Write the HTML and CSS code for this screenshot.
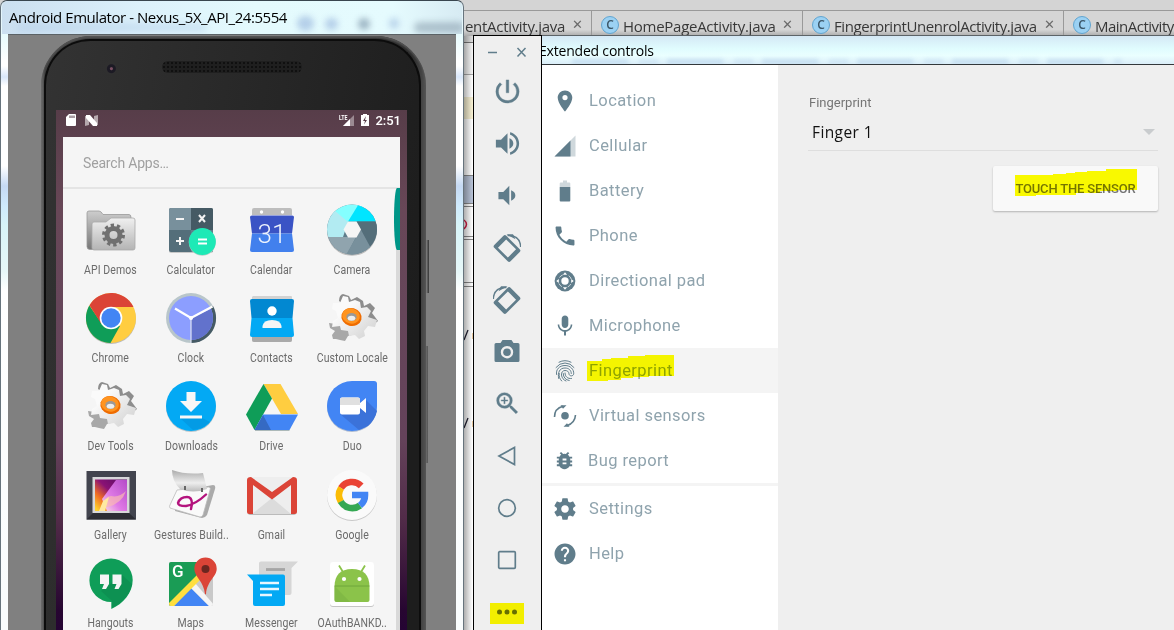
FILE: index.html
```html
<!DOCTYPE html>
<html lang="en">
<head>
<meta charset="utf-8">
<title>Android Emulator</title>
<link rel="stylesheet" href="styles.css">
</head>
<body>
<div class="desktop">
  <div class="ide">
    <div class="ide-tabs">
      <div class="tab t1"><span class="tab-name n1">entActivity.java</span><span class="x">✕</span></div>
      <div class="tab t2"><span class="c"><b>C</b></span><span class="tab-name n2">HomePageActivity.java</span><span class="x">✕</span></div>
      <div class="tab t3"><span class="c"><b>C</b></span><span class="tab-name n3">FingerprintUnenrolActivity.java</span><span class="x">✕</span></div>
      <div class="tab t4"><span class="c"><b>C</b></span><span class="tab-name n4">MainActivity</span></div>
    </div>
    <svg class="ide-strip" width="12" height="595" viewBox="0 0 12 595">
      <rect width="12" height="595" fill="#fff"/>
      <rect width="12" height="7" fill="#dcdcdc"/><rect y="6" width="12" height="1" fill="#777"/>
      <rect y="7" width="12" height="31" fill="#f4f4f4"/><rect y="38" width="12" height="1" fill="#aaa"/>
      <rect y="61" width="12" height="22" fill="#f7f0d2"/>
      <rect y="139" width="12" height="28" fill="#b7c2d6"/><path d="M0 139.500H12M0 167.500H12M0 170.500H12M0 200.500H12M0 203.500H12M0 246.500H12M0 250.500H12" stroke="#888"/>
      <path d="M1 184q5 4 0 9" fill="none" stroke="#d81b45" stroke-width="1.500"/>
      <path d="M1 304l4-10M1 392l4-10" stroke="#223" stroke-width="1.300"/>
      <path d="M9.500 297v6M9.500 385v6" stroke="#e8c9a0"/>
      <defs><linearGradient id="sh"><stop stop-color="#000" stop-opacity=".35"/><stop offset=".8" stop-color="#000" stop-opacity="0"/></linearGradient></defs>
      <rect width="12" height="595" fill="url(#sh)"/>
    </svg>
  </div>

  <section class="emulator">
    <div class="emu-title"><i class="blob b1"></i><i class="blob b2"></i><i class="blob b3"></i><i class="blob b4"></i><i class="blob b5"></i><i class="blob b6"></i><span>Android Emulator - Nexus_5X_API_24:5554</span></div>
    <div class="emu-body">
      <i class="side-key k1"></i><i class="side-key k2"></i>
      <div class="phone">
        <div class="phone-face">
          <div class="phone-top"><i class="lens"></i><i class="speaker"></i></div>
          <div class="screen">
            <div class="status">
              <svg width="10" height="12" viewBox="0 0 10 12"><path d="M3 0h6q1 0 1 1v10q0 1-1 1H1q-1 0-1-1V3z" fill="#fff"/><path d="M4 1.500v2.500M6 1.500v2.500M8 1.500v2.500" stroke="#573d49"/></svg>
              <svg class="n" width="13" height="11" viewBox="0 0 13 11"><path d="M0 1h4v9l-4 1zM9 1l4-1v10l-4 1z" fill="#b5a9ae"/><path d="M1 0h4l7 8v3H8L1 3z" fill="#fff"/></svg>
              <span class="space"></span>
              <svg width="16" height="13" viewBox="0 0 16 13"><path d="M15 1v11H4z" fill="#9b8a92"/><path d="M11 5v7H4z" fill="#fff"/><text x="0" y="5.500" fill="#fff" font-family="Roboto,sans-serif" font-size="6.500" font-weight="700" textLength="8.500" lengthAdjust="spacingAndGlyphs">LTE</text></svg>
              <svg class="bat" width="8" height="12" viewBox="0 0 8 12"><path d="M2 0h4v1h2v11H0V1h2z" fill="#fff"/><path d="M5 2L2 7h2l-1 3.500L6 6H4z" fill="#573d49"/></svg>
              <span class="time">2:51</span>
            </div>
            <div class="drawer">
              <div class="search">Search Apps…</div>
              <div class="apps">
                <div class="app"><svg viewBox="0 0 52 52"><defs><linearGradient id="fg" x2="0" y2="1"><stop stop-color="#f0f0f0"/><stop offset="1" stop-color="#b4b4b4"/></linearGradient><linearGradient id="fb" x2="0" y2="1"><stop stop-color="#cdcdcd"/><stop offset="1" stop-color="#777"/></linearGradient></defs><path d="M2 9q0-2 2-2h10q2 0 4 3.500h26q2 0 2 3v32H5q-3 0-3-3z" fill="url(#fb)" stroke="#999" stroke-width=".8"/><path d="M7 20q0-2 2-2h12l5-4h22q2 0 2 2v28q0 2-2 2H9q-2 0-2-2z" fill="url(#fg)" stroke="#aaa" stroke-width=".8"/><circle cx="28.500" cy="31" r="9.500" fill="none" stroke="#707070" stroke-width="4" stroke-dasharray="3.200 2.770"/><circle cx="28.500" cy="31" r="6.500" fill="none" stroke="#707070" stroke-width="5"/></svg><span>API Demos</span></div>
                <div class="app"><svg viewBox="0 0 52 52"><rect x="4" y="5" width="44" height="44" rx="2" fill="#c8c8c8"/><rect x="4" y="4" width="44" height="44" rx="2" fill="#546e7a"/><path d="M4 6q0-2 2-2h20v22H4z" fill="#78909c"/><path d="M26 4h20q2 0 2 2v20H26z" fill="#455a64"/><path d="M26 26h22v20q0 2-2 2H26z" fill="#607d8b"/><path d="M11 15h8M11 37h8M15 33v8M34 11l6 7M40 11l-6 7" stroke="#f3f3f3" stroke-width="2"/><circle cx="37.300" cy="38.300" r="13.500" fill="#b5ccc5"/><circle cx="37.300" cy="37.500" r="13.500" fill="#1de9b6"/><path d="M33 35.500h9M33 39.500h9" stroke="#fff" stroke-width="2"/></svg><span>Calculator</span></div>
                <div class="app"><svg viewBox="0 0 52 52"><path d="M6 11V6q0-2 2-2h36q2 0 2 2v5z" fill="#bdbdbd"/><circle cx="15.500" cy="8" r="1.700" fill="#fff"/><circle cx="36.500" cy="8" r="1.700" fill="#fff"/><path d="M4 13q0-1.500 2-1.500h40q2 0 2 1.500l-2 16.500H6z" fill="#3a53c5"/><path d="M6 29.500h40L48 46q0 2-2 2H6q-2 0-2-2z" fill="#4280ed"/><text x="26" y="38.500" text-anchor="middle" font-family="Roboto,sans-serif" font-size="26" font-weight="300" fill="#eef3fd">31</text></svg><span>Calendar</span></div>
                <div class="app"><svg viewBox="0 0 52 52"><circle cx="26" cy="26.800" r="25" fill="#bbb"/><clipPath id="cc"><circle cx="26" cy="25.500" r="25"/></clipPath><g clip-path="url(#cc)"><rect width="52" height="52" fill="#607d8b"/><path d="M0 0H40L22 18 17.500 26z" fill="#84ffff"/><path d="M22 17.500L34-2H60V17.500z" fill="#00e5ff"/><path d="M8 6l14 12-5 15H-2V6z" fill="#b2ebf2"/><path d="M-2 33h32L18 56H-4z" fill="#90a4ae"/><path d="M30 33.500L35 25l12 22-15 9H17z" fill="#78909c"/><path d="M30.500 17.500H56V48H47z" fill="#546e7a"/></g><path d="M22 17.500h8.500l4.500 8-4.500 8H22l-4.500-8z" fill="#f5f5f5"/></svg><span>Camera</span></div>

                <div class="app"><svg viewBox="0 0 52 52"><circle cx="26" cy="27" r="25" fill="#bbb"/><circle cx="26" cy="26" r="25" fill="#ffcd40"/><path d="M4.300 13.500L17 32l18 2L25.500 51A25 25 0 0 1 4.300 13.500z" fill="#0f9d58"/><path d="M4.500 13.200L16.300 32 25 15H48.500A25 25 0 0 0 4.500 13.200z" fill="#db4437"/><circle cx="26" cy="26" r="11.300" fill="#fff"/><circle cx="26" cy="26" r="9.700" fill="#4285f4"/></svg><span>Chrome</span></div>
                <div class="app"><svg viewBox="0 0 52 52"><circle cx="26" cy="26" r="25" fill="#b9c6ca"/><path d="M26 26L48 14A25 25 0 0 1 26 51z" fill="#455a64"/><circle cx="26" cy="26" r="22" fill="#8c9eff"/><path d="M26 26L46 17A22 22 0 0 1 26 48z" fill="#6272cc"/><path d="M10 16.500L26 26l21.500-11.500" fill="none" stroke="#fff" stroke-width="2.300"/><path d="M26 26v25" stroke="#e0e4f5" stroke-width="1.200"/><circle cx="26" cy="26" r="2" fill="#fff"/></svg><span>Clock</span></div>
                <div class="app"><svg viewBox="0 0 52 52"><path d="M7 4h38q1 0 1 1v43q0 2-2 2H8q-2 0-2-2V5z" fill="#d2d2d2"/><path d="M6 44h40v4q0 2-2 2H8q-2 0-2-2z" fill="#aaa"/><path d="M4 9q0-2 2-2h40q2 0 2 2l-1.500 17h-41z" fill="#0288d1"/><path d="M5.500 26h41L48 43q0 2-2 2H6q-2 0-2-2z" fill="#03a9f4"/><circle cx="26" cy="19" r="4.700" fill="#fff"/><path d="M16.500 36v-2q1-6 9.500-6t9.500 6v2z" fill="#f5f5f5"/></svg><span>Contacts</span></div>
                <div class="app"><svg viewBox="0 0 52 52"><defs><linearGradient id="gg" x2="1" y2="1"><stop offset=".3" stop-color="#fafafa"/><stop offset="1" stop-color="#cfcfcf"/></linearGradient><g id="gear"><path d="M13 9q0-6 4-7l6 2 2 4 6-3 6 4 1 5 6-3 5 5-3 5 3 4 3 4-5 4z" fill="#8d8d8d"/><path d="M3 31l7 1 6 2 12 6-2 3-4 1-3 5-5-1-4-1-3 0-1-4 3-4-5-3z" fill="#a8a8a8"/><path d="M7 11l7 0 3-7 5 1 1 5 6-2 5 2 1 6 6-1 4 4-3 6 9 3-2 7-7-1-4 5 1 5-6 3-4-4-6 1-1-5-7-1-1-4-8 1 1-6 5-3-2-7-4-2z" fill="url(#gg)"/><ellipse cx="25.500" cy="25" rx="10.200" ry="9" transform="rotate(15 25.500 25)" fill="#ef6c00"/><ellipse cx="25" cy="24" rx="9" ry="7.500" transform="rotate(15 25 24)" fill="#ff9420"/><ellipse cx="25.500" cy="25" rx="5.200" ry="4" fill="#999"/><ellipse cx="25.500" cy="26.200" rx="3.800" ry="2.500" fill="#eee"/></g></defs><use href="#gear"/></svg><span>Custom Locale</span></div>

                <div class="app"><svg viewBox="0 0 52 52"><use href="#gear"/></svg><span>Dev Tools</span></div>
                <div class="app"><svg viewBox="0 0 52 52"><circle cx="26" cy="27" r="25" fill="#b8c6cc"/><circle cx="26" cy="26" r="25" fill="#03a9f4"/><path d="M37 38L45 42 37 48 28 50 15 38z" fill="#039be5"/><path d="M21.500 12h9v9H37L26 32 15 21h6.500zM15 35.500h22v3H15z" fill="#f7f7f7"/></svg><span>Downloads</span></div>
                <div class="app"><svg viewBox="0 0 52 52"><path d="M17.500 4h17L52 34H35z" fill="#ffcd40"/><path d="M17.500 4L26 18.500 8.500 50 0 34.500z" fill="#0f9d58"/><path d="M17 34.500h35L43.500 50h-35z" fill="#4285f4"/><path d="M17 35l8 15H8.500z" fill="#356ac3"/><path d="M9 50.500h34.500" stroke="#9aa" stroke-width=".8"/></svg><span>Drive</span></div>
                <div class="app"><svg viewBox="0 0 52 52"><path d="M26 2h22q3 0 3 3v22A25 25 0 1 1 26 2z" fill="#aebbd0"/><path d="M26 1h22q3 0 3 3v22A25 25 0 1 1 26 1z" fill="#4285f4"/><path d="M39 19L51 31Q49 40 42 46L33 50 14 34z" fill="#3b72d9"/><path d="M16 17.500h16q2 0 2 2V23l6-5v15l-6-5v4.500q0 2-2 2H16q-2 0-2-2v-13q0-2 2-2z" fill="#fff"/><path d="M14 19.500q0-2 2-2h16q2 0 2 2V25H14z" fill="#e0e0e0"/></svg><span>Duo</span></div>

                <div class="app"><svg viewBox="0 0 52 52"><defs><linearGradient id="ga" x1="0" x2="1" y1="1" y2="0"><stop offset=".05" stop-color="#ffd12c"/><stop offset=".3" stop-color="#ef6c24"/><stop offset=".55" stop-color="#8a1275"/><stop offset="1" stop-color="#520b61"/></linearGradient><linearGradient id="gp" x1="1" x2="0" y1="0" y2="1"><stop stop-color="#b44bc8"/><stop offset=".6" stop-color="#e07be6"/><stop offset="1" stop-color="#fbe3e3"/></linearGradient></defs><rect x="1.500" y="2" width="49.500" height="48.500" fill="#42444e"/><path d="M1.500 50.500L8 44h36l7 6.500z" fill="#2c2d34"/><rect x="7.500" y="8" width="37" height="36" fill="#d7d7d9"/><rect x="10" y="10.500" width="32" height="31.500" fill="url(#ga)"/><path d="M31 11h11v31H22l-5-12z" fill="url(#gp)"/><path d="M16 40q3-13 10-13 8 2 15-5-4 12-18 16z" fill="#f9b9b4" opacity=".7"/><path d="M14 42l4-10 6-4-4 14z" fill="#ffe9a0"/></svg><span>Gallery</span></div>
                <div class="app"><svg viewBox="0 0 52 52"><defs><linearGradient id="gb" x2="0" y2="1"><stop stop-color="#aaa"/><stop offset=".6" stop-color="#eee"/><stop offset="1" stop-color="#bbb"/></linearGradient></defs><path d="M14 22l34-6q3 0 2 4L42 46q-2 3-5 3L10 42z" fill="#aaa"/><path d="M12 21l32-3q2 1 1 3l-7 25q-1 2-3 2L5 39q-1-2 0-3z" fill="#fafafa" stroke="#bbb" stroke-width=".8"/><path d="M7 1q14 5 31 3l4 16q-14 5-27 0Q7 12 7 1z" fill="url(#gb)"/><path d="M20 17v4M37 19v4" stroke="#666" stroke-width="2"/><path d="M41 25.500Q31 35 21 37q-8 0-8-3 2-6 9-6 5 0 5 7l-1 5" fill="none" stroke="#b4147e" stroke-width="2.400" stroke-linecap="round"/></svg><span>Gestures Build..</span></div>
                <div class="app"><svg viewBox="0 0 52 52"><rect x="2" y="9" width="48" height="37" rx="2" fill="#bbb"/><rect x="1" y="8" width="50" height="37" rx="2" fill="#eee"/><path d="M6 45l20-16 19 16z" fill="#dcdcdc"/><path d="M1 11q0-3 4-3l21 15L47 8q4 0 4 3v32q0 2-2 2h-4V16L26 30.500 7 16v29H3q-2 0-2-2z" fill="#db4437"/></svg><span>Gmail</span></div>
                <div class="app"><svg viewBox="0 0 52 52"><circle cx="26" cy="27" r="25" fill="#c8c8c8"/><circle cx="26" cy="26" r="25" fill="#fafafa"/><g fill="none" stroke-width="6.600"><path d="M35.200 16.800A13 13 0 0 0 15 19" stroke="#ea4335"/><path d="M15.100 19a13 13 0 0 0-.2 13.700" stroke="#fbbc05"/><path d="M14.800 32.500A13 13 0 0 0 34 36.500" stroke="#34a853"/><path d="M34 36.500A13 13 0 0 0 39 26H26" stroke="#4285f4"/></g></svg><span>Google</span></div>

                <div class="app"><svg viewBox="0 0 52 52"><path d="M26 1.500A21.700 21.700 0 0 1 47.700 23C47.700 36 38 47 26.300 52v-7A21.700 21.700 0 1 1 26 1.500z" fill="#0f9d58"/><path d="M37 18l10 9q-3 15-20 24v-7l-11-10z" fill="#0d9152"/><path d="M15 17.500h9V27l-3 5h-4l2-5h-4zM27.500 17.500h9V27l-3 5h-4l2-5h-4z" fill="#f5f5f5"/></svg><span>Hangouts</span></div>
                <div class="app"><svg viewBox="0 0 52 52"><clipPath id="mc"><rect x="4" y="5" width="44" height="44" rx="2"/></clipPath><g clip-path="url(#mc)"><rect width="52" height="52" fill="#c9c9c9"/><path d="M0 0h52L4 50z" fill="#1a9c55"/><path d="M8 50L26 31l18 18z" fill="#4285f4"/><path d="M26 31l4-5 20 23h-6z" fill="#f5f5f5"/><path d="M4 46L33 17l3 5L9 49H4z" fill="#ffdf3f"/></g><text x="7" y="20" font-family="Roboto,sans-serif" font-size="17" font-weight="500" fill="#fff">G</text><path d="M40.500.500a11.200 11.200 0 0 1 11.200 11.200c0 8-9.700 12-10.700 25.500h-1c-1-13-10.700-17.500-10.700-25.500A11.200 11.200 0 0 1 40.500.500z" fill="#db4437"/><circle cx="40.500" cy="12" r="4" fill="#6b2620"/></svg><span>Maps</span></div>
                <div class="app"><svg viewBox="0 0 52 52"><path d="M13 6q0-1.500 2-1.500h37L45.500 11v25q0 2-2 2H15q-2 0-2-2z" fill="#d6d6d6"/><path d="M20 12.500h19" stroke="#a5a5a5" stroke-width="2.800"/><path d="M1 17.500h36q2 0 2 2V47q0 2-2 2H9q-2 0-2-2V24z" fill="#03a9f4"/><path d="M14 26h19M14 32h19M14 38h12" stroke="#e8f6fe" stroke-width="2.600"/></svg><span>Messenger</span></div>
                <div class="app"><svg viewBox="0 0 52 52"><rect x="4" y="6" width="44" height="44" rx="3" fill="#c5c5c5"/><rect x="4" y="5" width="44" height="44" rx="3" fill="#fff"/><path d="M8.500 30q0-18 17.500-18t17.500 18v13q0 2-2 2h-31q-2 0-2-2z" fill="#8bc34a"/><path d="M8.500 29L24 45H10.500q-2 0-2-2z" fill="#7cb342" opacity=".6"/><path d="M8.500 29h35" stroke="#689f38" stroke-width=".8"/><path d="M13 8.500l4 6.500M39 8.500L35 15" stroke="#8bc34a" stroke-width="1.800"/><circle cx="18" cy="22" r="2.100" fill="#fff"/><circle cx="33.500" cy="22" r="2.100" fill="#fff"/></svg><span>OAuthBANKD..</span></div>
              </div>
              <div class="scroll"><i></i></div>
            </div>
          </div>
        </div>
      </div>
    </div>
  </section>

  <section class="toolbar">
    <div class="tool-head"><svg width="42" height="12" viewBox="0 0 42 12"><path d="M1 6.500h9M30.500 2l8 8.500M38.500 2l-8 8.500" stroke="#607d8b" stroke-width="1.500"/></svg></div>
    <div class="tool"><svg viewBox="0 0 24 24" width="31" height="31"><path d="M13 3h-2v10h2V3zm4.830 2.170l-1.420 1.420A6.920 6.920 0 0 1 19 12c0 3.870-3.130 7-7 7s-7-3.130-7-7c0-2.190 1.010-4.140 2.580-5.420L6.170 5.170A8.932 8.932 0 0 0 3 12a9 9 0 0 0 18 0c0-2.740-1.230-5.180-3.170-6.830z" stroke="#607d8b" stroke-width=".3"/></svg></div>
    <div class="tool"><svg viewBox="0 0 24 24" width="31" height="31"><path d="M3 9v6h4l5 5V4L7 9H3zm10.500-1v8c1.800-.7 3-2.200 3-4s-1.200-3.300-3-4zM14 3.230v2.060c2.890.86 5 3.540 5 6.710s-2.110 5.850-5 6.710v2.060c4.010-.91 7-4.490 7-8.770s-2.990-7.860-7-8.770z"/></svg></div>
    <div class="tool"><svg viewBox="0 0 24 24" width="29" height="29"><path d="M4.500 9v6h4l5 5V4l-5 5h-4zM15 7.700v8.600c2.200-.8 3.500-2.400 3.500-4.300S17.200 8.500 15 7.700z"/></svg></div>
    <div class="tool"><svg viewBox="0 0 28 28" width="28" height="28"><g id="rot"><path transform="rotate(45 14 14.500)" d="M4.500 6h19q2 0 2 2v13q0 2-2 2h-19q-2 0-2-2V8q0-2 2-2zM7 8.700v11.600h14V8.700z" fill-rule="evenodd"/><path d="M14.500 1.500Q27 1 27.700 13" fill="none" stroke="#607d8b" stroke-width="1.500"/><path d="M13.500.300h6.500l2.500 5z"/></g></svg></div>
    <div class="tool"><svg viewBox="0 0 28 28" width="28" height="28"><use href="#rot" transform="matrix(-1 0 0 1 28 0)"/></svg></div>
    <div class="tool cam"><svg viewBox="0 0 26 24" width="26" height="24"><path d="M8.500 1h9l2 3H24q1.500 0 1.500 1.500v16q0 1.500-1.500 1.500H2Q.500 23 .500 21.500v-16Q.500 4 2 4h4.500zM13 7a6.200 6.200 0 1 0 0 12.400A6.200 6.200 0 1 0 13 7z" fill-rule="evenodd"/><circle cx="13" cy="13.200" r="3.800"/></svg></div>
    <div class="tool"><svg viewBox="0 0 24 24" width="29" height="29"><path d="M15.500 14h-.79l-.28-.27A6.471 6.471 0 0 0 16 9.500 6.500 6.500 0 1 0 9.500 16c1.610 0 3.090-.59 4.230-1.570l.27.28v.79l5 4.990L20.490 19l-4.990-5zm-6 0C7.010 14 5 11.990 5 9.500S7.010 5 9.500 5 14 7.010 14 9.500 11.990 14 9.500 14zM9 6.800h1V9h2.200v1H10v2.200H9V10H6.800V9H9z" stroke="#607d8b" stroke-width=".3"/></svg></div>
    <div class="tool line"><svg viewBox="0 0 20 20" width="20" height="20"><path d="M17.500 1.500v17L2 10z"/></svg></div>
    <div class="tool line"><svg viewBox="0 0 20 20" width="20" height="20"><circle cx="10" cy="10" r="8.300"/></svg></div>
    <div class="tool line"><svg viewBox="0 0 20 20" width="20" height="20"><rect x="1.700" y="1.700" width="16.600" height="16.600" rx="1"/></svg></div>
    <div class="tool more"><span class="mark"><svg viewBox="0 0 20 6" width="20" height="6"><circle cx="2.500" cy="3" r="2.500"/><circle cx="10" cy="3" r="2.500"/><circle cx="17.500" cy="3" r="2.500"/></svg></span></div>
  </section>

  <section class="extended">
    <div class="ext-title"><i class="blur-text"></i><span>Extended controls</span></div>
    <div class="ext-body">
      <nav class="menu">
        <div class="item"><svg viewBox="0 0 24 24"><path d="M12 1.500C8 1.500 4.700 4.700 4.700 8.700 4.700 14 12 22.500 12 22.500s7.300-8.500 7.300-13.800c0-4-3.300-7.200-7.300-7.200zm0 9.700a2.600 2.600 0 1 1 0-5.200 2.600 2.600 0 0 1 0 5.200z"/></svg><span>Location</span></div>
        <div class="item"><svg viewBox="0 0 24 24"><path d="M22.500 1.500v21h-21z" fill="#cfd8dc"/><path d="M17.500 6.500v16h-16z"/></svg><span>Cellular</span></div>
        <div class="item"><svg viewBox="0 0 24 24"><path d="M17.300 8V4.500q0-1-1-1H14v-2h-4v2H7.700q-1 0-1 1V8z" fill="#cfd8dc"/><path d="M6.700 8h10.600v13.500q0 1-1 1H7.700q-1 0-1-1z"/></svg><span>Battery</span></div>
        <div class="item"><svg viewBox="0 0 24 24"><path transform="translate(-.6 -.6) scale(1.050)" d="M6.620 10.790c1.440 2.830 3.760 5.140 6.590 6.590l2.200-2.200c.27-.27.67-.36 1.020-.24 1.120.37 2.330.57 3.570.57.55 0 1 .45 1 1V20c0 .55-.45 1-1 1-9.390 0-17-7.610-17-17 0-.55.45-1 1-1h3.500c.55 0 1 .45 1 1 0 1.250.2 2.450.57 3.570.11.35.03.74-.25 1.020l-2.200 2.200z"/></svg><span>Phone</span></div>
        <div class="item"><svg viewBox="0 0 24 24"><circle cx="12" cy="12" r="10.400"/><path d="M12 3.300l2.100 2.500H9.900zM12 20.700l2.100-2.500H9.900zM3.300 12l2.500-2.100v4.200zM20.700 12l-2.500-2.100v4.200z" fill="#fff"/><circle cx="12" cy="12" r="6.500" fill="none" stroke="#fff" stroke-width=".7" stroke-dasharray="4 6.210" stroke-dashoffset="-3.100"/><circle cx="12" cy="12" r="3.700" fill="#fff"/></svg><span>Directional pad</span></div>
        <div class="item"><svg viewBox="0 0 24 24"><path transform="translate(0 -.5)" d="M12 14.500c1.900 0 3.300-1.500 3.300-3.400V5.300C15.300 3.400 13.900 2 12 2S8.700 3.400 8.700 5.300v5.800c0 1.900 1.400 3.400 3.300 3.400zm5.700-3.500c0 3.300-2.800 5.600-5.700 5.600S6.300 14.300 6.300 11H4.700c0 3.600 2.900 6.700 6.300 7.200V22h2v-3.800c3.500-.5 6.300-3.600 6.300-7.200z"/></svg><span>Microphone</span></div>
        <div class="item active"><svg viewBox="0 0 24 24"><g fill="none" stroke="#607d8b" stroke-width="1" stroke-linecap="round"><path d="M6 3.200Q12 0 18 3.200M3 8.500Q6.500 4 12 4t9 4.500"/><path d="M3.600 15.500C2.500 10.500 6.500 6.500 12 6.500s9 4 8.700 8.300c-.3 2.800-4.500 2.700-4.700 0C15.800 12.500 14.200 11.500 12 11.500s-3.900 2-3.500 4.500c.4 3 2 5 4.500 6"/><path d="M5.700 19.500C4.500 13.500 6.500 9 12 9c4 0 6.300 2.500 6.300 5.500M8.700 22C6.500 19.500 5.800 17.500 6.200 14.500M12 14c0 3.500 2.500 6 6.500 5.500M10.200 14.500c.2 4 2.300 6.500 6 7"/></g></svg><span>Fingerprint</span><svg class="hl" width="88" height="28" viewBox="0 0 88 28"><path d="M0 7h15V5h9V4h17V2h17V1h29v21H62v1H46v1H34v2H21v1H0z"/></svg></div>
        <div class="item"><svg viewBox="0 0 24 24"><circle cx="12" cy="11.700" r="3.800"/><path d="M1.500 13Q1.500 4.500 10 2.300M22.500 11Q22 19 14 21.700" fill="none" stroke="#607d8b" stroke-width="1.600"/><path d="M7.500 1.200h6l-3.500 3.500zM16.500 22.700h-6l3.500-3.500z"/></svg><span>Virtual sensors</span></div>
        <div class="item bug"><svg viewBox="0 0 24 24"><path d="M20 8h-2.810c-.45-.78-1.070-1.450-1.820-1.960L17 4.410 15.590 3l-2.170 2.170a6.002 6.002 0 0 0-2.830 0L8.410 3 7 4.410l1.620 1.630C7.880 6.550 7.260 7.220 6.810 8H4v2h2.090c-.05.33-.09.66-.09 1v1H4v2h2v1c0 .34.040.67.090 1H4v2h2.810c1.040 1.790 2.970 3 5.190 3s4.150-1.210 5.190-3H20v-2h-2.090c.05-.33.090-.66.090-1v-1h2v-2h-2v-1c0-.34-.04-.67-.09-1H20V8zm-6 8h-4v-2h4v2zm0-4h-4v-2h4v2z"/></svg><span>Bug report</span></div>
        <div class="rule"></div>
        <div class="item"><svg viewBox="0 0 24 24"><path transform="translate(-1 -1) scale(1.083)" d="M19.430 12.980c.04-.32.070-.64.070-.98s-.03-.66-.07-.98l2.110-1.650c.19-.15.24-.42.120-.64l-2-3.460c-.12-.22-.39-.3-.61-.22l-2.490 1c-.52-.4-1.080-.73-1.690-.98l-.38-2.650A.488.488 0 0 0 14 2h-4c-.25 0-.46.180-.49.420l-.38 2.650c-.61.250-1.170.590-1.690.980l-2.490-1c-.23-.09-.49 0-.61.220l-2 3.460c-.13.220-.07.490.120.640l2.110 1.650c-.04.320-.07.650-.07.980s.030.660.070.980l-2.110 1.650c-.19.150-.24.420-.12.640l2 3.460c.12.220.390.300.610.220l2.490-1c.52.400 1.080.730 1.690.980l.38 2.650c.03.240.240.420.490.420h4c.25 0 .46-.18.49-.42l.38-2.650c.61-.25 1.170-.59 1.690-.98l2.490 1c.23.090.490 0 .610-.22l2-3.460c.12-.22.070-.49-.12-.64l-2.110-1.650zM12 15.500c-1.930 0-3.500-1.570-3.500-3.500s1.570-3.500 3.500-3.500 3.500 1.570 3.500 3.500-1.570 3.500-3.500 3.500z"/></svg><span>Settings</span></div>
        <div class="item"><svg viewBox="0 0 24 24"><path transform="translate(-.6 -.6) scale(1.050)" d="M12 2C6.480 2 2 6.480 2 12s4.480 10 10 10 10-4.480 10-10S17.520 2 12 2zm1 17h-2v-2h2v2zm2.070-7.750l-.9.920C13.450 12.900 13 13.500 13 15h-2v-.5c0-1.100.450-2.100 1.170-2.830l1.240-1.260c.37-.36.590-.86.590-1.410 0-1.100-.9-2-2-2s-2 .9-2 2H8c0-2.210 1.790-4 4-4s4 1.790 4 4c0 .88-.36 1.680-.93 2.250z"/></svg><span>Help</span></div>
      </nav>
      <main class="panel">
        <div class="label">Fingerprint</div>
        <div class="select"><span>Finger 1</span><svg width="12" height="6" viewBox="0 0 12 6"><path d="M0 0h12L6 6z" fill="#c9ccce"/></svg></div>
        <div class="button"><span>TOUCH THE SENSOR</span><svg class="hl" width="123" height="28" viewBox="0 0 123 28"><path d="M0 6h38V5h13V4h9V3h12V2h19V0h31v21h-20v1H85v2H61v2H21v1H0z"/></svg></div>
      </main>
    </div>
  </section>
</div>
</body>
</html>
```
FILE: styles.css
```css
* { box-sizing: border-box; }
body { margin: 0; overflow: hidden; }
.desktop { position: relative; width: 1174px; height: 630px; overflow: hidden; background: #fff; font-family: "Open Sans", "Noto Sans", sans-serif; }
svg { display: block; flex: none; }

.ide { padding-top: 10px; background: #d4d4d4; height: 36px; }
.ide-tabs { display: flex; height: 26px; padding-left: 464px; border-top: 1px solid #999; background: linear-gradient(#d5d5d5 75%, #aaa); }
.tab { display: flex; align-items: center; height: 25px; padding-top: 5px; border-right: 1px solid #999; font-size: 15px; line-height: 20px; color: #383838; white-space: nowrap; flex: none; }
.tab-name { flex: none; }
.t1 { width: 128px; padding-left: 1px; }
.n1 { width: 101px; letter-spacing: -.3px; }
.t2 { width: 211px; padding-left: 9px; }
.t3 { width: 261px; padding-left: 9px; }
.t4 { width: 110px; padding-left: 9px; border: 0; }
.c { display: flex; align-items: center; justify-content: center; width: 18px; height: 18px; margin-right: 4px; border: 1px solid #62a5d0; border-radius: 50%; background: #9bd1f3; font-size: 12px; line-height: 16px; color: #3c5769; flex: none; position: relative; top: -1px; }
.c b { font-weight: 600; }
.n2 { width: 153px; letter-spacing: -.27px; }
.n3 { width: 204px; letter-spacing: -.42px; }
.n4 { letter-spacing: -.5px; }
.x { margin-left: 6px; width: 12px; font: 700 13px/20px "DejaVu Sans", sans-serif; color: #6a6a6a; position: relative; top: -1px; }
.ide-strip { margin-left: 463px; }

.emulator { position: absolute; left: 0; top: 0; width: 464px; height: 640px; padding: 0 7px; border: 1px solid #67747d; border-top-color: #39464f; border-radius: 7px 7px 0 0; background: linear-gradient(#e2f2fb 0, #e8fbfd 35px, #fff 60px, #fff 65px, #d9e7fa 76px, #fff 85px, #fff 165px, #c5d9f3 185px, #cfeafc 205px, #d8f4f8 225px, #e6f7f8 270px, #fff 290px, #f9fcfd 600px); }
.emu-title { position: relative; height: 33px; margin: 0 -6px; padding: 5px 0 0 7px; overflow: hidden; border-radius: 6px 6px 0 0; background: linear-gradient(90deg, #cbdff0, #dcf1fb 30%, #e4fafd 55%, #e5fbfe 85%, #d7ebf3); font-size: 15px; line-height: 22px; color: #000; white-space: nowrap; }
.emu-title span { position: relative; letter-spacing: -.45px; }
.blob { position: absolute; filter: blur(3px); border-radius: 8px; background: #a9c5e4; }
.b1 { left: 15px; top: 22px; width: 190px; height: 9px; opacity: .35; }
.b2 { left: 295px; top: 15px; width: 17px; height: 15px; opacity: .8; }
.b3 { left: 323px; top: 17px; width: 13px; height: 12px; opacity: .8; }
.b4 { left: 356px; top: 17px; width: 12px; height: 12px; background: #8ca4b6; opacity: .8; }
.b5 { left: 387px; top: 17px; width: 10px; height: 11px; opacity: .7; }
.b6 { left: 412px; top: 21px; width: 50px; height: 11px; background: #879cab; opacity: .55; }
.emu-body { position: relative; height: 600px; padding-left: 33px; border-top: 1px solid #5b6266; background: #808080; overflow: hidden; }
.side-key { position: absolute; background: linear-gradient(90deg, #555, #777 50%, #333); }
.k1 { left: 416px; top: 205px; width: 5px; height: 53px; }
.k2 { left: 417px; top: 311px; width: 3px; height: 117px; background: linear-gradient(90deg, #777, #555); }
.phone { position: relative; width: 385px; height: 700px; margin-top: 1px; padding: 3px 5px 0 3px; border-radius: 50px 50px 0 0; background: linear-gradient(90deg, #777 0, #3c3c3c 4px, #2c2c2c 370px, #414141 380px, #555 385px); box-shadow: inset 0 2px 2px #555; }
.phone-face { height: 690px; padding: 0 14px 0 10px; border: solid #0c0c0c; border-width: 2px 2px 0; border-radius: 46px 46px 0 0; background: linear-gradient(100deg, #333, #2b2b2b 30%, #1d1d1d 85%); }
.phone-top { display: flex; height: 69px; padding: 20px 0 0 47px; }
.lens { width: 14px; height: 14px; margin-right: 45px; border-radius: 50%; background: radial-gradient(circle at 60% 55%, #7c5064 0 1px, #1c1a24 2px 4px, #303030 5px); }
.speaker { width: 140px; height: 12px; border-radius: 6px; background: radial-gradient(circle, #101010 1px, transparent 1.300px) 0 0 / 4px 4px, #1f1f1f; }
.screen { width: 351px; height: 560px; background: linear-gradient(#573d49 0, #684757 100px, #66465a 200px, #64425a 330px, #512b48 410px, #270631 500px, #210038 560px); }
.status { display: flex; align-items: center; height: 27px; padding: 0 6px 7px 10px; }
.n { margin-left: 9px; }
.space { flex: 1; }
.bat { margin: 0 6px 0 6px; }
.time { font: 500 13px/18px Roboto, sans-serif; color: #fff; padding-top: 1px; }
.drawer { position: relative; width: 337px; height: 530px; margin-left: 7px; background: #f5f5f5; }
.search { height: 52px; padding: 17px 20px; border-bottom: 2px solid #e4e4e4; font: 14px/18px Roboto, sans-serif; color: #a0a0a0; letter-spacing: -.18px; }
.apps { display: grid; grid-template-columns: repeat(4, 80.500px); grid-auto-rows: 88.450px; padding: 14.500px 0 0 7.300px; }
.app { display: flex; flex-direction: column; align-items: center; }
.app svg { width: 52px; height: 52px; }
.app span { margin-top: 5px; font: 12.500px/17px Roboto, sans-serif; color: #6b6b6b; white-space: nowrap; transform: scaleX(.84); letter-spacing: .1px; }
.scroll { position: absolute; right: 0; top: 51px; width: 4px; height: 480px; background: #d9d9d9; }
.scroll i { display: block; width: 6px; height: 62px; margin-left: -2px; background: #009688; border-radius: 4px 0 0 4px / 40px 0 0 40px; }

.toolbar { position: absolute; left: 473px; top: 35px; width: 69px; height: 610px; border: 1px solid #000; background: #efefef; }
.tool-head { display: flex; justify-content: center; height: 30px; padding-top: 10px; }
.tool { display: flex; align-items: center; justify-content: center; height: 52px; padding: 0 1px 1px 0; fill: #607d8b; }
.cam { padding-bottom: 2px; }
.line { padding-bottom: 0; }
.line svg { fill: none; stroke: #607d8b; stroke-width: 1.700; }
.more { padding: 2px 1px 0 0; }
.mark { display: flex; justify-content: center; width: 34px; height: 21px; padding-top: 6px; background: #f2ee00; fill: #686f00; }

.extended { position: absolute; left: 542px; top: 35px; width: 632px; height: 600px; border-top: 1px solid #5c6367; }
.ext-title { position: relative; height: 29px; padding-top: 4px; overflow: hidden; border-bottom: 1px solid #33383b; background: linear-gradient(#d4e8f5, #e0fcfe 45%, #eaffff 70%, #dbeef9); font-size: 14px; line-height: 22px; color: #000; white-space: nowrap; }
.ext-title span { position: relative; margin-left: -3px; letter-spacing: -.2px; }
.blur-text { position: absolute; left: 30px; top: 23px; width: 550px; height: 5px; filter: blur(2px); background: repeating-linear-gradient(90deg, #9fc0e2 0 55px, transparent 58px 66px, #b4d0ea 68px 85px, transparent 88px 95px); opacity: .4; }
.ext-body { display: flex; height: 571px; }
.menu { width: 236px; padding-top: 13px; background: #fff; flex: none; }
.item { position: relative; display: flex; align-items: center; height: 45px; padding: 0 0 0 10.500px; font: 16.500px/24px Roboto, sans-serif; letter-spacing: .42px; color: #8fa3ad; white-space: nowrap; fill: #607d8b; }
.item span { padding-top: 1px; }
.item > svg { width: 24px; height: 24px; margin-right: 12.500px; }
.item > svg.hl { width: 88px; height: 28px; }
.active { background: #f4f4f4; }
.bug > svg { width: 23px; height: 23px; }
.hl { position: absolute; fill: #ff0; mix-blend-mode: multiply; }
.item .hl { left: 45px; top: 6px; margin: 0; }
.rule { height: 3px; background: #f4f4f4; }
.panel { flex: 1; display: flex; flex-direction: column; padding: 29px 16px 0 30px; background: #efefef; }
.label { margin-left: 1px; font: 13px/18px Roboto, sans-serif; color: #757575; }
.select { display: flex; align-items: center; justify-content: space-between; height: 39px; padding: 1px 3px 0 4px; border-bottom: 1px solid #dedede; font-size: 15.500px; letter-spacing: .4px; color: #111; }
.button { position: relative; display: flex; align-items: center; justify-content: center; align-self: flex-end; width: 165px; height: 45px; margin-top: 15px; border-radius: 2px; background: #f9f9f9; box-shadow: 0 1px 2px rgba(0,0,0,.25); font: 500 13px/18px Roboto, sans-serif; letter-spacing: -.18px; color: #757575; white-space: nowrap; }
.button .hl { left: 22px; top: 3px; }
```
